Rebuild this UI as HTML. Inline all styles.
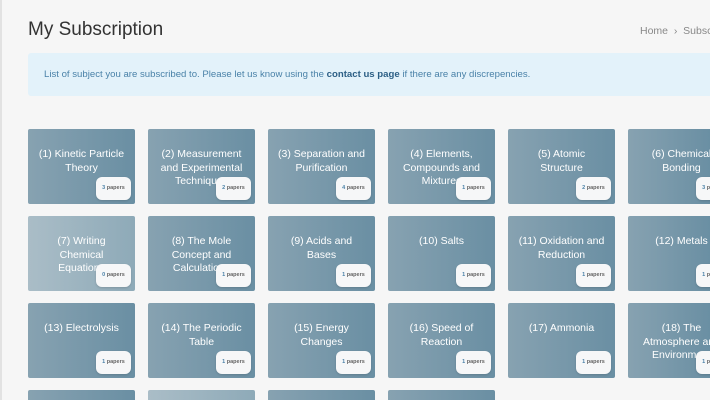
<!DOCTYPE html>
<html><head><meta charset="utf-8"><style>
html,body{margin:0;padding:0;width:710px;height:400px;overflow:hidden;background:#f6f6f6;font-family:"Liberation Sans",sans-serif;position:relative}
.lb{position:absolute;left:0;top:0;width:2px;height:400px;background:#e2e2e2}
h1{position:absolute;left:28px;top:19px;margin:0;font-weight:normal;font-size:19px;color:#333}
.bc{position:absolute;left:640px;top:25px;font-size:10.5px;color:#888;white-space:nowrap}
.al{position:absolute;left:28px;top:53px;width:682px;height:43px;background:#e3f2fa;border-radius:3px 0 0 3px;font-size:9.6px;color:#4a82a8;line-height:43px;padding-left:16px;box-sizing:border-box;white-space:nowrap;overflow:hidden}
.al b{color:#2c5f85}
.c{position:absolute;width:107px;height:75px;border-radius:2px;background:linear-gradient(90deg,#87a2b1,#6a8fa3);color:#fff;font-size:10.5px;text-align:center;line-height:13.5px;box-sizing:border-box;padding:19px 0 0;overflow:hidden;white-space:nowrap}
.c.l{background:linear-gradient(90deg,#aabdc7,#8eaab8)}
.c.s{height:10px}
.c.e{width:82px;border-radius:2px 0 0 2px}
.c.e>div:first-child{width:107px}
.b{position:absolute;left:68px;top:48px;width:35px;height:23px;background:#f6f7f8;border-radius:6px;font-size:5.5px;font-weight:bold;color:#666;line-height:23px;text-align:center;box-shadow:0 1px 2px rgba(0,0,0,.15)}
.b span{color:#4a82a8}
.wrap{position:absolute;left:0;top:0;width:710px;height:400px;overflow:hidden}
</style></head><body><div class="wrap">
<div class="lb"></div>
<h1>My Subscription</h1>
<div class="bc">Home &nbsp;›&nbsp; Subscription</div>
<div class="al">List of subject you are subscribed to. Please let us know using the <b>contact us page</b> if there are any discrepencies.</div>

<div class="c" style="left:28px;top:129px">(1) Kinetic Particle<br>Theory<div class="b"><span>3</span> papers</div></div>
<div class="c" style="left:148px;top:129px">(2) Measurement<br>and Experimental<br>Techniques<div class="b"><span>2</span> papers</div></div>
<div class="c" style="left:268px;top:129px">(3) Separation and<br>Purification<div class="b"><span>4</span> papers</div></div>
<div class="c" style="left:388px;top:129px">(4) Elements,<br>Compounds and<br>Mixtures<div class="b"><span>1</span> papers</div></div>
<div class="c" style="left:508px;top:129px">(5) Atomic<br>Structure<div class="b"><span>2</span> papers</div></div>
<div class="c e" style="left:628px;top:129px"><div>(6) Chemical<br>Bonding</div><div class="b"><span>3</span> papers</div></div>

<div class="c l" style="left:28px;top:216px">(7) Writing<br>Chemical<br>Equations<div class="b"><span>0</span> papers</div></div>
<div class="c" style="left:148px;top:216px">(8) The Mole<br>Concept and<br>Calculations<div class="b"><span>1</span> papers</div></div>
<div class="c" style="left:268px;top:216px">(9) Acids and<br>Bases<div class="b"><span>1</span> papers</div></div>
<div class="c" style="left:388px;top:216px">(10) Salts<div class="b"><span>1</span> papers</div></div>
<div class="c" style="left:508px;top:216px">(11) Oxidation and<br>Reduction<div class="b"><span>1</span> papers</div></div>
<div class="c e" style="left:628px;top:216px"><div>(12) Metals</div><div class="b"><span>1</span> papers</div></div>

<div class="c" style="left:28px;top:303px">(13) Electrolysis<div class="b"><span>1</span> papers</div></div>
<div class="c" style="left:148px;top:303px">(14) The Periodic<br>Table<div class="b"><span>1</span> papers</div></div>
<div class="c" style="left:268px;top:303px">(15) Energy<br>Changes<div class="b"><span>1</span> papers</div></div>
<div class="c" style="left:388px;top:303px">(16) Speed of<br>Reaction<div class="b"><span>1</span> papers</div></div>
<div class="c" style="left:508px;top:303px">(17) Ammonia<div class="b"><span>1</span> papers</div></div>
<div class="c e" style="left:628px;top:303px"><div>(18) The<br>Atmosphere and<br>Environment</div><div class="b"><span>1</span> papers</div></div>

<div class="c s" style="left:28px;top:390px"></div>
<div class="c s l" style="left:148px;top:390px"></div>
<div class="c s" style="left:268px;top:390px"></div>
<div class="c s" style="left:388px;top:390px"></div>
</div></body></html>
